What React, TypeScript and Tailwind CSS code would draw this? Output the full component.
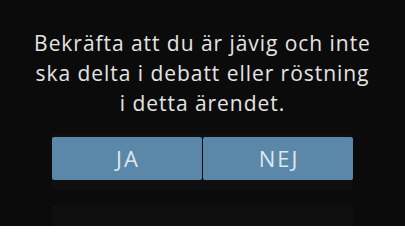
export default function App() {
  return (
    <div className="w-[405px] h-[226px] bg-[#0b0b0b] overflow-hidden flex flex-col items-center" style={{ fontFamily: '"Open Sans", sans-serif' }}>
      <p className="mt-[28px] w-[400px] text-center text-[21px] leading-[30px] text-[#e4e4e4] tracking-[0.95px]">
        Bekräfta att du är jävig och inte
        <br />
        ska delta i debatt eller röstning
        <br />
        i detta ärendet.
      </p>
      <div className="mt-[16px] w-[301px] bg-[#0f0f0f] pt-[3px] pb-[10px]">
        <div className="flex gap-px">
          <button className="flex-1 h-[43px] rounded-[2px] bg-[#5b87a8] text-[22px] tracking-[2px] pl-[2px] text-[#dde7ef]">JA</button>
          <button className="flex-1 h-[43px] rounded-[2px] bg-[#5b87a8] text-[22px] tracking-[2px] pl-[2px] text-[#dde7ef]">NEJ</button>
        </div>
      </div>
      <div className="mt-[15px] w-[301px] h-[30px] bg-[#0f0f0f]" />
    </div>
  );
}
